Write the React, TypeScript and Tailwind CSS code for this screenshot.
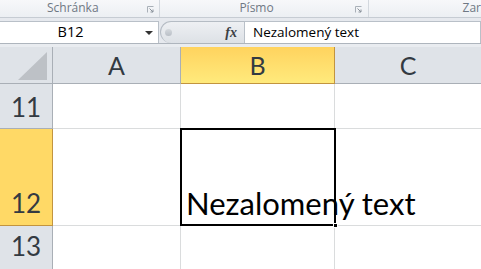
import React from "react"

const hdr = "font-['Lato','Liberation_Sans',sans-serif] text-[#333a42]"

function Launcher() {
  return (
    <svg width="7" height="7" viewBox="0 0 7 7" className="mb-[2px]">
      <path d="M0.5 0.5 H6.5 M0.5 0.5 V6.5" stroke="#a9b0b8" fill="none" />
      <path d="M2.5 2.5 L6 6 M6 3.5 V6 H3.5" stroke="#8a929b" fill="none" />
    </svg>
  )
}

function Ribbon() {
  return (
    <div className="flex h-[18px] border-b border-[#c6ccd3] bg-gradient-to-b from-[#f7f8fa] to-[#eceff3] font-['Open_Sans','Noto_Sans',sans-serif] text-[12px] leading-none text-[#6f7884]">
      <div className="flex w-[162px] items-end justify-between border-r border-[#d3d8de] pb-[2px] pl-[47px] pr-[5px]">
        <span className="pb-[1px]">Schránka</span>
        <Launcher />
      </div>
      <div className="flex w-[210px] items-end justify-between border-r border-[#d3d8de] pb-[2px] pl-[79px] pr-[6px]">
        <span className="pb-[1px]">Písmo</span>
        <Launcher />
      </div>
      <div className="flex flex-1 items-end pb-[3px] pl-[94px]">
        <span>Zar</span>
      </div>
    </div>
  )
}

function FormulaBar() {
  return (
    <div className="flex h-[26px] border-b border-[#aeb5bd] bg-[#e6e9ee] pt-[3px] font-['Open_Sans','Noto_Sans',sans-serif] text-[13.5px] text-black">
      <div className="flex h-[22px] w-[159px] items-center border-t border-r border-[#b9c0c8] bg-white">
        <span className="flex-1 pr-[4px] text-center text-[14.5px] leading-none">B12</span>
        <svg width="8" height="5" viewBox="0 0 8 5" className="mr-[5px] mt-[1px]">
          <path d="M0 0 H8 L4 4 Z" fill="#333" />
        </svg>
      </div>
      <div className="ml-[1px] flex h-[22px] w-[84px] items-center rounded-l-full border border-r-0 border-b-0 border-[#b5bcc4] bg-gradient-to-b from-[#eef0f3] to-[#dde1e6]">
        <span className="ml-[4px] h-[7px] w-[7px] rounded-full bg-gradient-to-b from-[#d5d9de] to-[#b9bfc6]" />
        <span className="ml-auto mr-[7px] font-['Liberation_Serif',serif] text-[14px] font-bold italic leading-none text-[#3b3f44]">
          fx
        </span>
      </div>
      <div className="flex h-[22px] flex-1 items-center border border-b-0 border-[#b9c0c8] bg-white pl-[8px] leading-none">
        Nezalomený text
      </div>
    </div>
  )
}

export default function App() {
  return (
    <div className="h-[269px] w-[481px] overflow-hidden bg-white">
      <Ribbon />
      <FormulaBar />
      <div className="h-[3px] bg-[#e9ecf0]" />
      <div className="relative grid h-[222px] grid-cols-[53px_128px_154px_1fr] grid-rows-[37px_45px_97px_1fr]">
        {/* header row */}
        <div className="flex items-end justify-end border-r border-b border-[#a9afb6] bg-[#dfe3e8] pr-[4px] pb-[2px]">
          <svg width="30" height="29" viewBox="0 0 30 29">
            <path d="M29 0 V28 H0 Z" fill="#bdc1c6" />
          </svg>
        </div>
        <div className={`flex items-end justify-center border-r border-b border-[#a9afb6] bg-[#dfe3e8] pb-[5px] text-[25px] leading-none ${hdr}`}>
          A
        </div>
        <div className={`flex items-end justify-center border-r border-b border-[#c2943f] bg-gradient-to-b from-[#ffd35e] to-[#ffea7c] pb-[5px] text-[25px] leading-none ${hdr}`}>
          B
        </div>
        <div className={`flex items-end justify-center border-b border-[#a9afb6] bg-[#dfe3e8] pb-[5px] text-[25px] leading-none ${hdr}`}>
          C
        </div>

        {/* row 11 */}
        <div className={`flex items-end justify-center border-r border-b border-[#a9afb6] bg-[#dfe3e8] pb-[8px] text-[26px] leading-none ${hdr}`}>
          11
        </div>
        <div className="border-r border-b border-[#dadcdd]" />
        <div className="border-r border-b border-[#dadcdd]" />
        <div className="border-b border-[#dadcdd]" />

        {/* row 12 */}
        <div className={`flex items-end justify-center border-r border-b border-[#c2943f] bg-[#ffd966] pb-[9px] text-[26px] leading-none ${hdr}`}>
          12
        </div>
        <div className="border-r border-b border-[#dadcdd]" />
        <div className="flex items-end whitespace-nowrap border-r border-b border-[#dadcdd] pb-[6px] pl-[5px] font-['Lato','Liberation_Sans',sans-serif] text-[31px] leading-none text-black">
          Nezalomený text
        </div>
        <div className="border-b border-[#dadcdd]" />

        {/* row 13 */}
        <div className={`flex items-start justify-center border-r border-[#a9afb6] bg-[#dfe3e8] pt-[7px] text-[26px] leading-none ${hdr}`}>
          13
        </div>
        <div className="border-r border-[#dadcdd]" />
        <div className="border-r border-[#dadcdd]" />
        <div />

        {/* selection */}
        <div className="pointer-events-none absolute left-[180px] top-[81px] h-[98px] w-[156px] border-2 border-black">
          <div className="absolute -bottom-[4px] -right-[4px] h-[5px] w-[5px] border border-white bg-black" />
        </div>
      </div>
    </div>
  )
}
